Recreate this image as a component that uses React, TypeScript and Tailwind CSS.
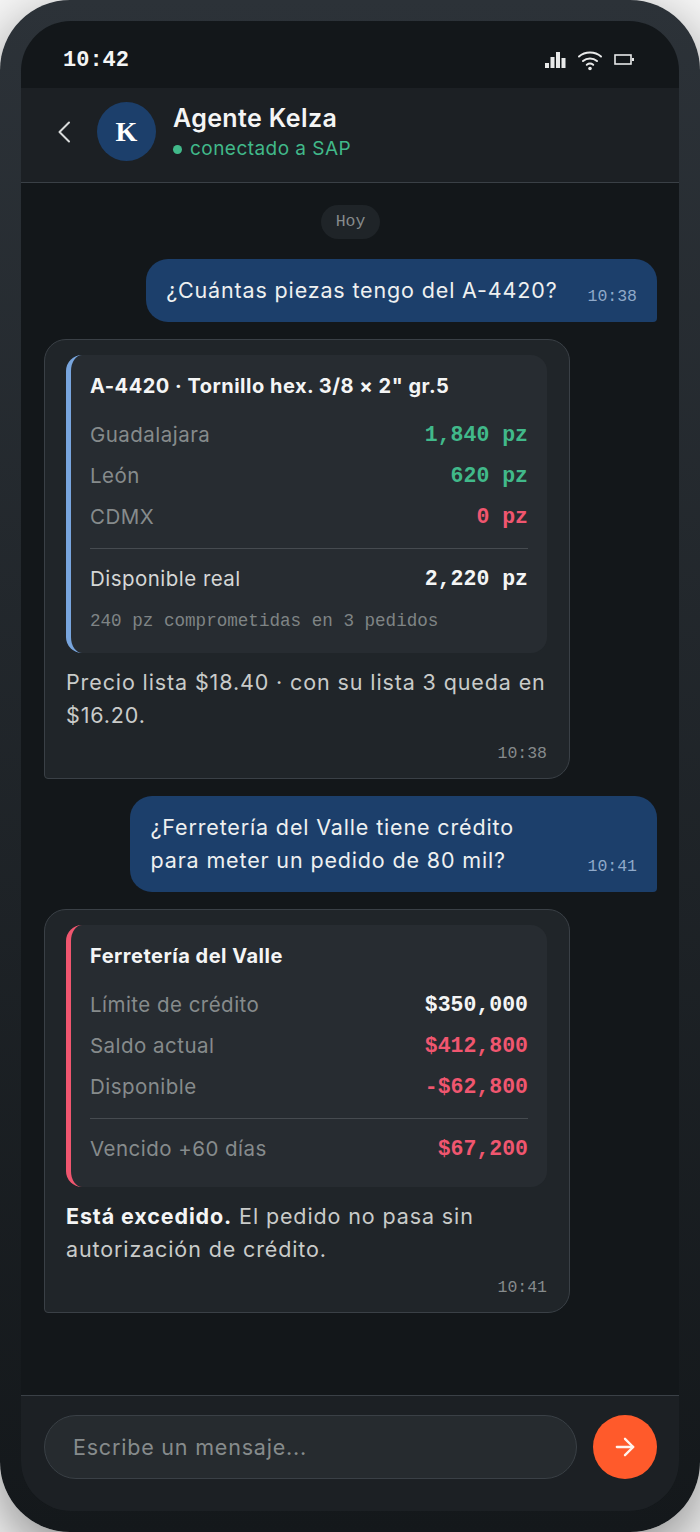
import React, { FC, ReactNode } from "react";
import { ArrowRight } from "lucide-react";

const sans = "font-['Inter','Noto_Sans',sans-serif]";
const mono = "font-['Liberation_Mono',monospace]";

const UserBubble: FC<{ time: string; children: ReactNode }> = ({ time, children }) => (
  <div className="self-end flex items-end gap-[30px] rounded-[22px] rounded-br-[4px] bg-[#1c3f6b] px-5 py-[15px]">
    <p className="max-w-[407px] text-[21.5px] leading-[33px] tracking-[0.85px] text-[#eef0f0]">{children}</p>
    <span className={`${mono} text-[16.5px] leading-[20px] text-[#8fa9c9]`}>{time}</span>
  </div>
);

const Row: FC<{ label: string; value: string; color: string; labelColor?: string }> = ({
  label,
  value,
  color,
  labelColor = "text-[#868b8c]",
}) => (
  <div className="flex items-center justify-between h-[41px]">
    <span className={`text-[20.5px] tracking-[0.47px] ${labelColor}`}>{label}</span>
    <span className={`${mono} text-[21.5px] font-bold ${color}`}>{value}</span>
  </div>
);

const AgentBubble: FC<{ accent: string; title: string; time: string; card: ReactNode; children: ReactNode }> = ({
  accent,
  title,
  time,
  card,
  children,
}) => (
  <div className="w-[526px] rounded-[22px] rounded-bl-[4px] border border-[#3a4046] bg-[#202529] pl-[21px] pr-[22px] pt-[15px] pb-[14px]">
    <div className={`rounded-[16px] border-l-[5px] ${accent} bg-[#272c31] pl-[19px] pr-[19px] pt-[16px] pb-[17px]`}>
      <h3 className="mb-[13px] text-[20px] leading-[31px] font-bold tracking-[0.5px] text-[#f4f5f5]">{title}</h3>
      {card}
    </div>
    <p className="mt-[13px] text-[21.5px] leading-[33px] tracking-[0.88px] text-[#c9cbc9]">{children}</p>
    <div className={`${mono} mt-[12px] text-right text-[16.5px] leading-[20px] text-[#868b8c]`}>{time}</div>
  </div>
);

const green = "text-[#41b98a]";
const red = "text-[#f0566f]";
const white = "text-[#f4f5f5]";

export default function App() {
  return (
    <div className={`${sans} h-[1532px] w-[700px] overflow-hidden bg-[#f7f7f7]`}>
      <div className="h-full rounded-[70px] bg-gradient-to-b from-[#2c3238] to-[#14181b] p-[21px] shadow-[0_20px_60px_rgba(0,0,0,0.45)]">
        <div className="flex h-full flex-col overflow-hidden rounded-[50px] bg-[#13171a]">
          {/* status bar */}
          <div className="flex h-[67px] shrink-0 items-center justify-between pl-[42px] pr-[45px] pt-[11px]">
            <span className={`${mono} text-[22px] font-bold text-[#f4f5f5]`}>10:42</span>
            <div className="flex items-center gap-[11px]">
              <svg width="21" height="18" viewBox="0 0 21 18" fill="#e8e9e9">
                <rect x="0" y="12" width="4" height="5" />
                <rect x="5.5" y="6" width="4" height="11" />
                <rect x="11" y="1" width="4" height="16" />
                <rect x="16.5" y="7" width="4" height="10" />
              </svg>
              <svg width="26" height="22" viewBox="0 0 26 22" fill="none" stroke="#e8e9e9" strokeWidth="2" strokeLinecap="round">
                <path d="M2 7.5C8 2.2 18 2.2 24 7.5" />
                <path d="M6 12C10 8.6 16 8.6 20 12" />
                <path d="M9.8 15.8C11.6 14.4 14.4 14.4 16.2 15.8" />
                <circle cx="13" cy="19.5" r="1.8" fill="#e8e9e9" stroke="none" />
              </svg>
              <svg width="20" height="12" viewBox="0 0 20 12" fill="none">
                <rect x="1" y="1" width="16" height="9" stroke="#e8e9e9" strokeWidth="1.6" />
                <rect x="18" y="4" width="2" height="3" fill="#e8e9e9" />
              </svg>
            </div>
          </div>

          {/* header */}
          <div className="flex h-[95px] shrink-0 items-center border-b border-[#3a4046] bg-[#1c2024] pl-[36px] pb-[7px]">
            <svg width="14" height="22" viewBox="0 0 14 22" fill="none" stroke="#d9dbdb" strokeWidth="2" strokeLinecap="round" strokeLinejoin="round">
              <path d="M12 1.5L2.5 11L12 20.5" />
            </svg>
            <div className="ml-[26px] flex h-[59px] w-[59px] items-center justify-center rounded-full bg-[#1c3f6b] font-['Liberation_Serif',serif] text-[28px] font-bold text-white">
              K
            </div>
            <div className="ml-[17px]">
              <div className="text-[25px] leading-[32px] font-semibold tracking-[0.38px] text-[#f4f5f5]">Agente Kelza</div>
              <div className="mt-[3px] flex items-center gap-[8px] text-[19px] leading-[24px] tracking-[0.46px] text-[#41b98a]">
                <span className="h-[9px] w-[9px] rounded-full bg-[#41b98a]" />
                conectado a SAP
              </div>
            </div>
          </div>

          {/* messages */}
          <div className="flex min-h-0 flex-1 flex-col gap-[17px] pl-[23px] pr-[22px] pt-[22px]">
            <span className={`${mono} mb-[3px] self-center rounded-full bg-[#1f2428] px-[15px] py-[7px] text-[16.5px] leading-[20px] text-[#868b8c]`}>
              Hoy
            </span>
            <UserBubble time="10:38">¿Cuántas piezas tengo del A-4420?</UserBubble>
            <AgentBubble
              accent="border-[#78a5dd]"
              title={'A-4420 · Tornillo hex. 3/8 × 2" gr.5'}
              time="10:38"
              card={
                <>
                  <Row label="Guadalajara" value="1,840 pz" color={green} />
                  <Row label="León" value="620 pz" color={green} />
                  <Row label="CDMX" value="0 pz" color={red} />
                  <div className="my-[10px] border-t border-[#464b50]" />
                  <Row label="Disponible real" value="2,220 pz" color={white} labelColor="text-[#d5d7d6]" />
                  <div className={`${mono} mt-[10px] mb-[4px] text-[17.6px] leading-[22px] text-[#7f8485]`}>
                    240 pz comprometidas en 3 pedidos
                  </div>
                </>
              }
            >
              Precio lista $18.40 · con su lista 3 queda en $16.20.
            </AgentBubble>
            <UserBubble time="10:41">¿Ferretería del Valle tiene crédito para meter un pedido de 80 mil?</UserBubble>
            <AgentBubble
              accent="border-[#f0566f]"
              title="Ferretería del Valle"
              time="10:41"
              card={
                <>
                  <Row label="Límite de crédito" value="$350,000" color={white} />
                  <Row label="Saldo actual" value="$412,800" color={red} />
                  <Row label="Disponible" value="-$62,800" color={red} />
                  <div className="my-[10px] border-t border-[#464b50]" />
                  <Row label="Vencido +60 días" value="$67,200" color={red} />
                </>
              }
            >
              <b className="font-bold text-[#f4f5f5]">Está excedido.</b> El pedido no pasa sin autorización de crédito.
            </AgentBubble>
          </div>

          {/* composer */}
          <div className="flex h-[116px] shrink-0 items-start gap-[16px] border-t border-[#3a4046] bg-[#1c2024] pl-[23px] pr-[22px] pt-[19px]">
            <div className="flex h-[64px] flex-1 items-center rounded-full border border-[#3a4046] bg-[#262b2f] pl-[28px] text-[21.5px] tracking-[0.8px] text-[#868b8c]">
              Escribe un mensaje...
            </div>
            <div className="flex h-[64px] w-[64px] items-center justify-center rounded-full bg-[#ff5a2b]">
              <ArrowRight size={28} strokeWidth={2} className="text-[#fff3ee]" />
            </div>
          </div>
        </div>
      </div>
    </div>
  );
}
